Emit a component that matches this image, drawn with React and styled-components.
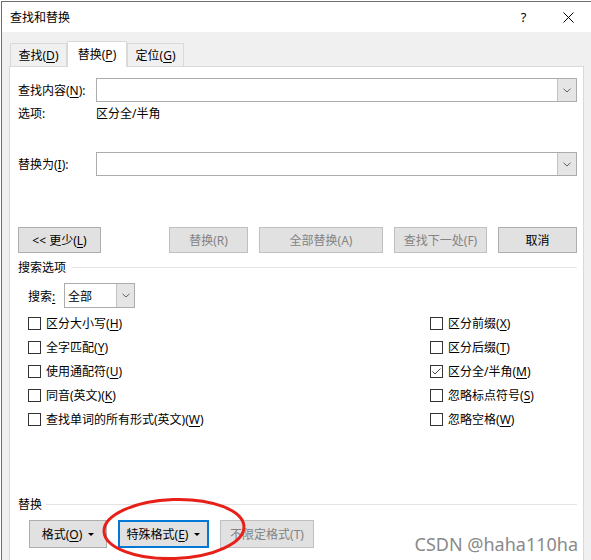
import React from 'react';
import styled, { createGlobalStyle } from 'styled-components';

const GlobalStyle = createGlobalStyle`
  html, body {
    margin: 0;
    background: #fff;
  }
  body {
    font-family: "Noto Sans", "Noto Sans CJK SC", sans-serif;
    font-size: 12px;
    color: #000;
  }
`;

const Window = styled.div`
  position: relative;
  box-sizing: border-box;
  width: 590px;
  height: 559px;
  margin: 1px 0 0 1px;
  border-top: 1px solid #6e6e6e;
  border-left: 1px solid #6e6e6e;
  display: flex;
  flex-direction: column;
  overflow: hidden;
`;

const TitleBar = styled.div`
  height: 30px;
  flex: none;
  display: flex;
  align-items: center;
  padding-left: 8px;
  background: #fff;
`;

const Title = styled.span`
  font-size: 12px;
`;

const Caption = styled.div`
  margin-left: auto;
  display: flex;
  height: 100%;
`;

const CaptionButton = styled.div`
  width: 45px;
  height: 100%;
  display: flex;
  align-items: center;
  justify-content: center;
  font-size: 13px;
`;

const Body = styled.div`
  flex: 1;
  display: flex;
  flex-direction: column;
  background: #f0f0f0;
  padding: 9px 7px 0 7px;
  min-height: 0;
`;

const TabRow = styled.div`
  display: flex;
  align-items: flex-end;
  padding-left: 1px;
  margin-bottom: -1px;
  position: relative;
  z-index: 1;
`;

const Tab = styled.div`
  box-sizing: border-box;
  width: ${(p) => p.$w}px;
  height: ${(p) => (p.$active ? 26 : 24)}px;
  display: flex;
  align-items: center;
  justify-content: center;
  padding-bottom: ${(p) => (p.$active ? 2 : 0)}px;
  border: 1px solid #d9d9d9;
  border-bottom: ${(p) => (p.$active ? 'none' : '1px solid #d9d9d9')};
  background: ${(p) => (p.$active ? '#fff' : '#f0f0f0')};
`;

const Panel = styled.div`
  flex: 1;
  display: flex;
  flex-direction: column;
  background: #fff;
  border: 1px solid #d9d9d9;
  border-bottom: none;
  padding: 0 6px 0 8px;
`;

const Key = styled.u`
  text-underline-offset: 2px;
  text-decoration-thickness: 1px;
`;

const FieldRow = styled.div`
  display: flex;
  align-items: center;
  height: ${(p) => p.$h || 24}px;
  margin-top: ${(p) => p.$mt}px;
  padding-left: ${(p) => p.$pl || 0}px;
`;

const Label = styled.span`
  width: ${(p) => p.$w}px;
  flex: none;
  white-space: nowrap;
`;

const Combo = styled.div`
  box-sizing: border-box;
  display: flex;
  height: 100%;
  width: ${(p) => (p.$w ? `${p.$w}px` : 'auto')};
  flex: ${(p) => (p.$w ? 'none' : '1')};
  border: 1px solid #acacac;
  background: #fff;
`;

const ComboText = styled.span`
  flex: 1;
  display: flex;
  align-items: center;
  padding-left: 3px;
`;

const DropButton = styled.div`
  width: ${(p) => p.$w || 17}px;
  display: flex;
  align-items: center;
  justify-content: center;
  background: #e5e5e5;
  border-left: 1px solid #c2c2c2;
`;

const ButtonRow = styled.div`
  display: flex;
  align-items: stretch;
  gap: ${(p) => p.$gap}px;
  height: ${(p) => p.$h}px;
  margin-top: ${(p) => p.$mt}px;
  padding-left: ${(p) => p.$pl || 0}px;
`;

const Spacer = styled.div`
  flex: 1;
`;

const Button = styled.div`
  box-sizing: border-box;
  width: ${(p) => p.$w}px;
  display: flex;
  align-items: center;
  justify-content: center;
  gap: 6px;
  background: #e1e1e1;
  border: 1px solid ${(p) => (p.$focus ? '#0078d7' : p.$off ? '#bfbfbf' : '#adadad')};
  box-shadow: ${(p) => (p.$focus ? 'inset 0 0 0 1px #0078d7' : 'none')};
  color: ${(p) => (p.$off ? '#838383' : '#000')};
  white-space: nowrap;
`;

const Caret = styled.span`
  width: 0;
  height: 0;
  border-left: 3px solid transparent;
  border-right: 3px solid transparent;
  border-top: 3px solid #000;
  margin-top: 1px;
`;

const Heading = styled.div`
  display: flex;
  align-items: center;
  height: 16px;
  margin-top: ${(p) => p.$mt}px;
  &::after {
    content: '';
    flex: 1;
    height: 1px;
    margin-left: ${(p) => p.$gap}px;
    background: #e3e3e3;
  }
`;

const Options = styled.div`
  display: grid;
  grid-template-columns: 402px 1fr;
  margin-top: 3px;
  padding-left: 10px;
`;

const Column = styled.div`
  display: flex;
  flex-direction: column;
`;

const CheckRow = styled.div`
  display: flex;
  align-items: center;
  gap: 5px;
  height: 24px;
`;

const Box = styled.span`
  box-sizing: border-box;
  width: 13px;
  height: 13px;
  border: 1px solid #333;
  background: #fff;
  display: flex;
  align-items: center;
  justify-content: center;
`;

const Ring = styled.svg`
  position: absolute;
  left: 98px;
  top: 494px;
  pointer-events: none;
`;

const Watermark = styled.div`
  position: absolute;
  right: 13px;
  top: 530px;
  font-family: "Noto Sans", sans-serif;
  font-size: 18px;
  line-height: 24px;
  color: #8a8a8a;
  background: rgba(255, 255, 255, 0.6);
`;

const Chevron = () => (
  <svg width="8" height="5" viewBox="0 0 8 5">
    <path d="M0.5 0.8 L4 4 L7.5 0.8" fill="none" stroke="#606060" strokeWidth="1" />
  </svg>
);

const Check = ({ on }) => (
  <Box>
    {on && (
      <svg width="11" height="9" viewBox="0 0 11 9">
        <path d="M1.5 4.5 L4 7 L9.5 1.5" fill="none" stroke="#444" strokeWidth="1" />
      </svg>
    )}
  </Box>
);

const leftOptions = [
  ['区分大小写', 'H'],
  ['全字匹配', 'Y'],
  ['使用通配符', 'U'],
  ['同音(英文)', 'K'],
  ['查找单词的所有形式(英文)', 'W'],
];

const rightOptions = [
  ['区分前缀', 'X'],
  ['区分后缀', 'T'],
  ['区分全/半角', 'M', true],
  ['忽略标点符号', 'S'],
  ['忽略空格', 'W'],
];

const Option = ({ text, k, on }) => (
  <CheckRow>
    <Check on={on} />
    <span>
      {text}(<Key>{k}</Key>)
    </span>
  </CheckRow>
);

export default function App() {
  return (
    <>
      <GlobalStyle />
      <Window>
        <TitleBar>
          <Title>查找和替换</Title>
          <Caption>
            <CaptionButton>?</CaptionButton>
            <CaptionButton>
              <svg width="11" height="11" viewBox="0 0 11 11">
                <path d="M0.5 0.5 L10.5 10.5 M10.5 0.5 L0.5 10.5" stroke="#000" strokeWidth="1" />
              </svg>
            </CaptionButton>
          </Caption>
        </TitleBar>
        <Body>
          <TabRow>
            <Tab $w={57}>
              <span>
                查找(<Key>D</Key>)
              </span>
            </Tab>
            <Tab $w={60} $active>
              <span>
                替换(<Key>P</Key>)
              </span>
            </Tab>
            <Tab $w={57}>
              <span>
                定位(<Key>G</Key>)
              </span>
            </Tab>
          </TabRow>
          <Panel>
            <FieldRow $mt={11}>
              <Label $w={78}>
                查找内容(<Key>N</Key>):
              </Label>
              <Combo>
                <ComboText />
                <DropButton $w={18}>
                  <Chevron />
                </DropButton>
              </Combo>
            </FieldRow>
            <FieldRow $mt={2} $h={18}>
              <Label $w={78}>选项:</Label>
              <span>区分全/半角</span>
            </FieldRow>
            <FieldRow $mt={30}>
              <Label $w={78}>
                替换为(<Key>I</Key>):
              </Label>
              <Combo>
                <ComboText />
                <DropButton $w={18}>
                  <Chevron />
                </DropButton>
              </Combo>
            </FieldRow>

            <ButtonRow $mt={51} $h={26} $gap={11}>
              <Button $w={83}>
                <span>
                  &lt;&lt; 更少(<Key>L</Key>)
                </span>
              </Button>
              <Spacer />
              <Button $w={79} $off>
                替换(R)
              </Button>
              <Button $w={124} $off>
                全部替换(A)
              </Button>
              <Button $w={93} $off>
                查找下一处(F)
              </Button>
              <Button $w={79}>取消</Button>
            </ButtonRow>

            <Heading $mt={6} $gap={6}>
              搜索选项
            </Heading>
            <FieldRow $mt={8} $h={25} $pl={10}>
              <Label $w={36}>
                搜索<Key>:</Key>
              </Label>
              <Combo $w={71}>
                <ComboText>全部</ComboText>
                <DropButton>
                  <Chevron />
                </DropButton>
              </Combo>
            </FieldRow>

            <Options>
              <Column>
                {leftOptions.map(([t, k]) => (
                  <Option key={t} text={t} k={k} />
                ))}
              </Column>
              <Column>
                {rightOptions.map(([t, k, on]) => (
                  <Option key={t} text={t} k={k} on={on} />
                ))}
              </Column>
            </Options>

            <Heading $mt={65} $gap={4}>
              替换
            </Heading>
            <ButtonRow $mt={8} $h={28} $gap={11} $pl={11}>
              <Button $w={78}>
                <span>
                  格式(<Key>O</Key>)
                </span>
                <Caret />
              </Button>
              <Button $w={91} $focus>
                <span>
                  特殊格式(<Key>E</Key>)
                </span>
                <Caret />
              </Button>
              <Button $w={94} $off>
                不限定格式(T)
              </Button>
            </ButtonRow>
          </Panel>
        </Body>
        <Ring width="148" height="66" viewBox="0 0 148 66">
          <ellipse
            cx="74"
            cy="33"
            rx="70"
            ry="29.5"
            fill="none"
            stroke="#e8201a"
            strokeWidth="3"
            transform="rotate(-2 74 33)"
          />
        </Ring>
        <Watermark>CSDN @haha110ha</Watermark>
      </Window>
    </>
  );
}
